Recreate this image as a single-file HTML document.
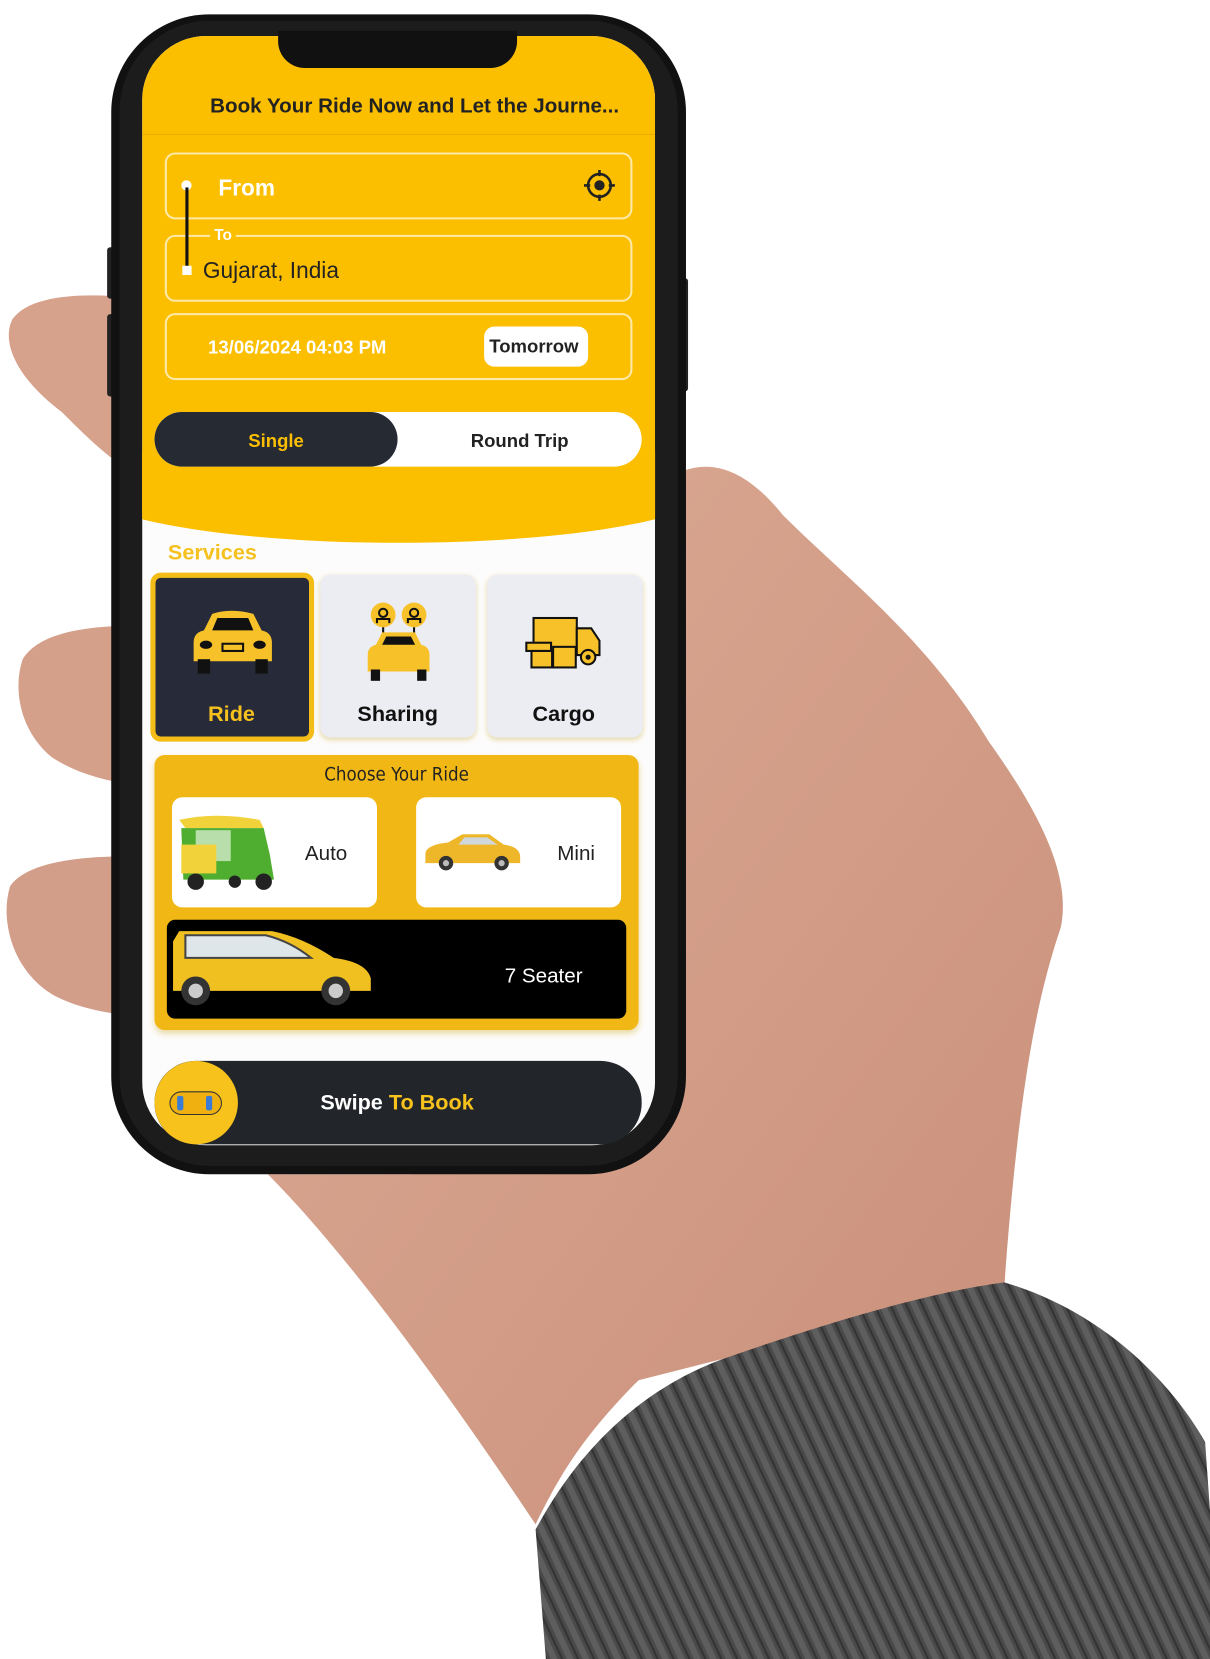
<!DOCTYPE html>
<html><head><meta charset="utf-8">
<style>
*{margin:0;padding:0;box-sizing:border-box}
body{width:1210px;height:1611px;background:#fff;position:relative;overflow:hidden;font-family:"Liberation Sans",sans-serif}
#w{position:absolute;left:0;top:0;width:1175px;height:1565px;transform:scale(1.03);transform-origin:0 0}
.a{position:absolute}
.t{position:absolute;white-space:nowrap;font-weight:bold}
</style></head><body><div id="w">
<svg class="a" style="left:0;top:0" width="1210" height="1611">
<defs>
<linearGradient id="sk" x1="0" y1="0" x2="1" y2="1"><stop offset="0" stop-color="#dcab95"/><stop offset="1" stop-color="#c98f7a"/></linearGradient>
<pattern id="knit" width="14" height="14" patternUnits="userSpaceOnUse" patternTransform="rotate(-25)"><rect width="14" height="14" fill="#4a4a4a"/><rect width="6" height="14" fill="#5e5e5e"/><rect x="9" width="2" height="14" fill="#333"/></pattern>
</defs>
<path d="M400 460 L640 470 C680 440 720 450 760 500 C820 560 900 620 960 720 C1010 790 1040 850 1030 900 C1010 960 990 1040 975 1250 L620 1340 C560 1400 540 1440 520 1480 C440 1360 340 1220 260 1140 L400 1140 Z" fill="url(#sk)"/>
<path d="M140 290 C90 284 30 284 12 310 C0 335 20 370 60 400 C85 425 110 450 140 465 Z" fill="#d7a28c"/>
<path d="M150 608 C100 606 40 610 22 640 C12 670 20 710 50 735 C80 755 120 762 150 764 Z" fill="#d4a08a"/>
<path d="M150 832 C100 830 30 832 10 860 C0 890 10 940 50 965 C80 982 120 986 150 988 Z" fill="#d39e89"/>
<path d="M520 1485 C560 1410 620 1350 700 1320 C800 1285 900 1255 975 1245 C1060 1270 1130 1330 1170 1400 L1185 1611 L530 1611 Z" fill="url(#knit)"/>
<rect x="104" y="240" width="10" height="50" rx="3" fill="#222"/>
<rect x="104" y="305" width="10" height="80" rx="3" fill="#222"/>
<rect x="660" y="270" width="8" height="110" rx="3" fill="#222"/>
<rect x="108" y="14" width="558" height="1126" rx="95" fill="#111"/>
<rect x="116" y="20" width="542" height="1112" rx="88" fill="#1c1c1c"/>
</svg>

<div class="a" style="left:138px;top:35px;width:498px;height:1077px;clip-path:inset(0 round 62px);background:#fdfcfc">
  <div class="a" style="left:0;top:0;width:498px;height:460px;background:#fcbf00"></div>
  <div class="a" style="left:-60px;top:380px;width:618px;height:112px;border-radius:50%;background:#fcbf00"></div>
  <div class="a" style="left:0;top:95px;width:498px;height:1px;background:#e8ad00"></div>
</div>
<div class="a" style="left:270px;top:30px;width:232px;height:36px;background:#111;border-radius:0 0 26px 26px"></div>

<div class="t" style="left:204px;top:92px;font-size:20px;color:#222">Book Your Ride Now and Let the Journe...</div>

<div class="a" style="left:160px;top:148px;width:454px;height:65px;border:2px solid #fde9a8;border-radius:10px"></div>
<div class="t" style="left:212px;top:170px;font-size:22px;color:#fff">From</div>
<svg class="a" style="left:566px;top:164px" width="32" height="32"><circle cx="16" cy="16" r="11" fill="none" stroke="#222" stroke-width="2.5"/><circle cx="16" cy="16" r="5" fill="#222"/><path d="M16 1v6M16 25v6M1 16h6M25 16h6" stroke="#222" stroke-width="2.5"/></svg>

<div class="a" style="left:160px;top:228px;width:454px;height:65px;border:2px solid #fde9a8;border-radius:10px"></div>
<div class="t" style="left:204px;top:220px;font-size:15px;color:#fff;background:#fcbf00;padding:0 4px">To</div>
<div class="t" style="left:197px;top:250px;font-size:22px;color:#222;font-weight:normal">Gujarat, India</div>
<div class="a" style="left:176px;top:175px;width:10px;height:10px;border-radius:50%;background:#fff"></div>
<div class="a" style="left:180px;top:182px;width:3px;height:78px;background:#111"></div>
<div class="a" style="left:177px;top:258px;width:9px;height:9px;background:#fff"></div>

<div class="a" style="left:160px;top:304px;width:454px;height:65px;border:2px solid #fde9a8;border-radius:10px"></div>
<div class="t" style="left:202px;top:327px;font-size:18px;color:#fff">13/06/2024 04:03 PM</div>
<div class="a" style="left:470px;top:317px;width:101px;height:39px;background:#fff;border-radius:10px"></div>
<div class="t" style="left:475px;top:326px;font-size:18px;color:#222">Tomorrow</div>

<div class="a" style="left:150px;top:400px;width:473px;height:53px;background:#fff;border-radius:27px"></div>
<div class="a" style="left:150px;top:400px;width:236px;height:53px;background:#252a33;border-radius:27px"></div>
<div class="t" style="left:241px;top:418px;font-size:18px;color:#fcbf00">Single</div>
<div class="t" style="left:457px;top:418px;font-size:18px;color:#222">Round Trip</div>

<div class="t" style="left:163px;top:525px;font-size:21px;color:#f5c11e">Services</div>

<div class="a" style="left:146px;top:556px;width:159px;height:164px;background:#272a38;border:5px solid #f3bc16;border-radius:10px"></div>
<div class="a" style="left:311px;top:558px;width:151px;height:158px;background:#ececf3;border-radius:10px;box-shadow:0 2px 5px #e5d9a8"></div>
<div class="a" style="left:473px;top:558px;width:151px;height:158px;background:#ececf3;border-radius:10px;box-shadow:0 2px 5px #e5d9a8"></div>
<svg class="a" style="left:184px;top:590px" width="84" height="66"><path d="M14 22 L22 6 Q40 0 62 6 L70 22 Q80 24 80 34 L80 52 L4 52 L4 34 Q4 24 14 22Z" fill="#f7c12a"/><path d="M22 22 L27 10 L57 10 L62 22Z" fill="#111"/><rect x="8" y="50" width="12" height="14" fill="#111"/><rect x="64" y="50" width="12" height="14" fill="#111"/><ellipse cx="16" cy="36" rx="6" ry="4" fill="#111"/><ellipse cx="68" cy="36" rx="6" ry="4" fill="#111"/><rect x="32" y="35" width="20" height="7" fill="none" stroke="#111" stroke-width="2"/></svg>
<div class="t" style="left:202px;top:682px;font-size:21px;color:#f5c11e">Ride</div>
<svg class="a" style="left:355px;top:582px" width="64" height="80"><circle cx="17" cy="15" r="12" fill="#f7c12a"/><circle cx="47" cy="15" r="12" fill="#f7c12a"/><circle cx="17" cy="13" r="4" fill="none" stroke="#111" stroke-width="2"/><circle cx="47" cy="13" r="4" fill="none" stroke="#111" stroke-width="2"/><path d="M11 23v-4h12v4M41 23v-4h12v4" stroke="#111" stroke-width="2" fill="none"/><path d="M17 27v8M47 27v8" stroke="#111" stroke-width="2"/><path d="M10 44 L16 32 L48 32 L54 44 Q62 46 62 54 L62 70 L2 70 L2 54 Q2 46 10 44Z" fill="#f7c12a"/><path d="M16 44 L20 36 L44 36 L48 44Z" fill="#111"/><rect x="5" y="68" width="9" height="11" fill="#111"/><rect x="50" y="68" width="9" height="11" fill="#111"/></svg>
<div class="t" style="left:347px;top:682px;font-size:21px;color:#111">Sharing</div>
<svg class="a" style="left:509px;top:596px" width="80" height="56"><rect x="9" y="4" width="42" height="34" fill="#f7c12a" stroke="#111" stroke-width="2"/><path d="M51 14h14l8 12v14h-22z" fill="#f7c12a" stroke="#111" stroke-width="2"/><rect x="2" y="28" width="24" height="8" fill="#f7c12a" stroke="#111" stroke-width="2"/><rect x="7" y="36" width="20" height="16" fill="#f7c12a" stroke="#111" stroke-width="2"/><rect x="28" y="32" width="22" height="20" fill="#f7c12a" stroke="#111" stroke-width="2"/><circle cx="62" cy="42" r="7" fill="#f7c12a" stroke="#111" stroke-width="2"/><circle cx="62" cy="42" r="2.5" fill="#111"/></svg>
<div class="t" style="left:517px;top:682px;font-size:21px;color:#111">Cargo</div>

<div class="a" style="left:150px;top:733px;width:470px;height:267px;background:#f1b815;border-radius:10px;box-shadow:0 3px 6px #e8d9a0"></div>
<div class="a" style="left:150px;top:742px;width:470px;text-align:center;font-size:18px;color:#222;font-family:'DejaVu Sans Condensed','Liberation Sans Narrow',sans-serif">Choose Your Ride</div>
<div class="a" style="left:167px;top:774px;width:199px;height:107px;background:#fff;border-radius:10px"></div>
<div class="a" style="left:404px;top:774px;width:199px;height:107px;background:#fff;border-radius:10px"></div>
<svg class="a" style="left:170px;top:790px" width="106" height="76"><path d="M4 6 Q40 -2 82 6 L86 14 L10 14Z" fill="#f2d23a"/><path d="M6 14 L86 14 L92 40 L96 64 L8 64 Z" fill="#4fae2f"/><rect x="20" y="16" width="34" height="30" fill="#fff" opacity=".6"/><rect x="6" y="30" width="34" height="28" fill="#f2d23a"/><circle cx="20" cy="66" r="8" fill="#222"/><circle cx="86" cy="66" r="8" fill="#222"/><circle cx="58" cy="66" r="6" fill="#222"/></svg>
<div class="t" style="left:296px;top:818px;font-size:20px;color:#222;font-weight:normal">Auto</div>
<svg class="a" style="left:409px;top:806px" width="100" height="40"><path d="M4 22 Q6 14 26 12 L40 4 L66 4 L80 14 Q96 16 96 26 L96 32 L4 32Z" fill="#eeb72a"/><path d="M42 7 L64 7 L74 14 L36 14Z" fill="#cfd6dc"/><circle cx="24" cy="32" r="7" fill="#333"/><circle cx="78" cy="32" r="7" fill="#333"/><circle cx="24" cy="32" r="3" fill="#bbb"/><circle cx="78" cy="32" r="3" fill="#bbb"/></svg>
<div class="t" style="left:541px;top:818px;font-size:20px;color:#222;font-weight:normal">Mini</div>
<div class="a" style="left:162px;top:893px;width:446px;height:96px;background:#000;border-radius:8px"></div>
<svg class="a" style="left:164px;top:900px" width="200" height="78"><path d="M4 14 L10 4 L100 4 Q130 10 160 30 Q192 34 196 50 L196 62 L4 62Z" fill="#f0c020"/><path d="M16 8 L94 8 Q118 14 138 30 L16 30Z" fill="#dfe6ea" stroke="#444" stroke-width="2"/><circle cx="26" cy="62" r="14" fill="#333"/><circle cx="162" cy="62" r="14" fill="#333"/><circle cx="26" cy="62" r="7" fill="#ccc"/><circle cx="162" cy="62" r="7" fill="#ccc"/></svg>
<div class="t" style="left:490px;top:937px;font-size:20px;color:#fff;font-weight:normal">7 Seater</div>

<div class="a" style="left:150px;top:1030px;width:473px;height:81px;background:#22262b;border-radius:40px"></div>
<div class="a" style="left:150px;top:1030px;width:81px;height:81px;background:#f7c21c;border-radius:50%"></div>
<svg class="a" style="left:162px;top:1058px" width="56" height="26"><rect x="3" y="2" width="50" height="22" rx="11" fill="#f0b010" stroke="#333" stroke-width="1"/><rect x="10" y="6" width="6" height="14" rx="2" fill="#3a7bd5"/><rect x="38" y="6" width="6" height="14" rx="2" fill="#3a7bd5"/></svg>
<div class="t" style="left:311px;top:1059px;font-size:21px;color:#fff">Swipe <span style="color:#f7c21c">To Book</span></div>
</div></body></html>
